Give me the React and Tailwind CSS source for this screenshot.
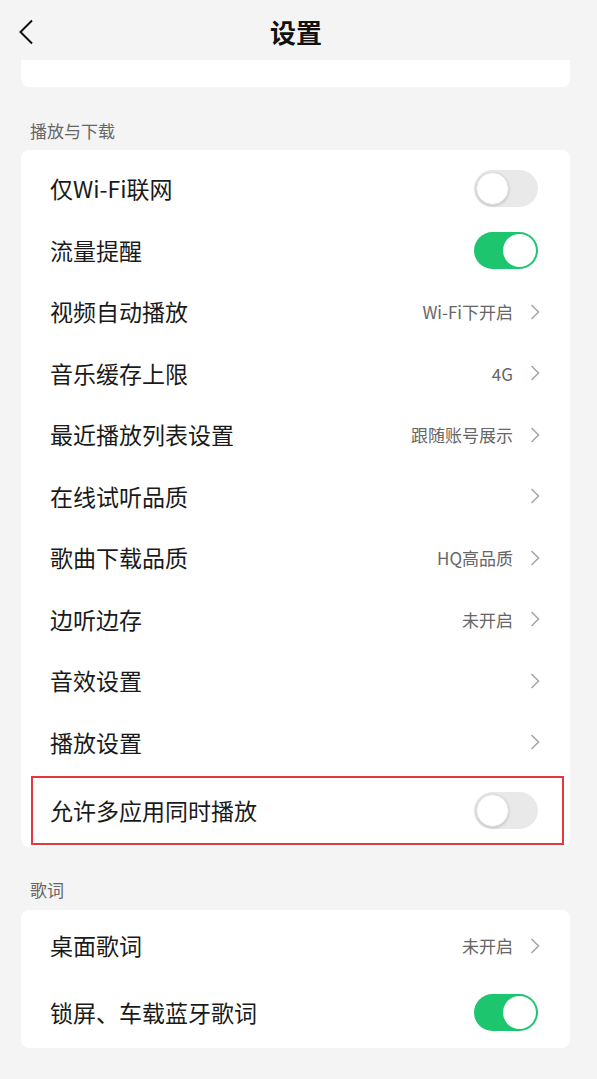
import React from "react";

const font = { fontFamily: '"Noto Sans CJK SC", "Noto Sans", sans-serif' };

function Toggle({ on }) {
  return (
    <div
      className={
        "relative h-[37px] w-[64px] rounded-full " +
        (on ? "bg-[#1dc56f]" : "bg-[#e9e9e9]")
      }
    >
      <div
        className={
          "absolute top-[2px] h-[33px] w-[33px] rounded-full bg-white " +
          (on
            ? "right-[2px]"
            : "left-[2px] shadow-[0_1px_3px_rgba(0,0,0,0.18)] border border-[#dcdcdc]")
        }
      />
    </div>
  );
}

function Chevron() {
  return (
    <svg width="12" height="18" viewBox="0 0 12 18" className="ml-[16px] -mr-[3px]">
      <path d="M2.5 2 L9.5 9 L2.5 16" fill="none" stroke="#a8a8a8" strokeWidth="1.6" />
    </svg>
  );
}

function Row({ label, value, toggle, h = "h-[61.5px]" }) {
  return (
    <div className={"flex items-center justify-between pl-[29px] pr-[32px] " + h}>
      <span className="text-[23px] text-[#1a1a1a] leading-none">{label}</span>
      <div className="flex items-center">
        {toggle !== undefined ? (
          <Toggle on={toggle} />
        ) : (
          <>
            {value && <span className="text-[17px] text-[#666] leading-none">{value}</span>}
            <Chevron />
          </>
        )}
      </div>
    </div>
  );
}

export default function App() {
  return (
    <div className="min-h-[1079px] w-[597px] bg-[#f4f4f4] overflow-hidden" style={font}>
      <div className="relative flex h-[62px] items-center justify-center pr-[5px]">
        <svg width="16" height="26" viewBox="0 0 16 26" className="absolute left-[18px] top-[19px]">
          <path d="M14 1.5 L2.5 13 L14 24.5" fill="none" stroke="#111" strokeWidth="2" />
        </svg>
        <span className="text-[26px] font-bold text-[#111]">设置</span>
      </div>
      <div className="ml-[21px] mr-[27px] -mt-[2px] h-[27px] rounded-b-[8px] bg-white" />
      <div className="px-[30px] pt-[35px] pb-[8px] text-[17px] text-[#666] leading-none">播放与下载</div>
      <div className="ml-[21px] mr-[27px] mt-[3px] rounded-[8px] bg-white pt-[8px] pb-[2px]">
        <Row label="仅Wi-Fi联网" toggle={false} />
        <Row label="流量提醒" toggle={true} />
        <Row label="视频自动播放" value="Wi-Fi下开启" />
        <Row label="音乐缓存上限" value="4G" />
        <Row label="最近播放列表设置" value="跟随账号展示" />
        <Row label="在线试听品质" />
        <Row label="歌曲下载品质" value="HQ高品质" />
        <Row label="边听边存" value="未开启" />
        <Row label="音效设置" />
        <Row label="播放设置" />
        <div className="ml-[10px] mr-[6px] mt-[3px] border-2 border-[#e5353f]">
          <div className="flex h-[65px] items-center justify-between pl-[17px] pr-[24px]">
            <span className="text-[23px] text-[#1a1a1a] leading-none">允许多应用同时播放</span>
            <Toggle on={false} />
          </div>
        </div>
      </div>
      <div className="px-[30px] pt-[34px] pb-[10px] text-[17px] text-[#666] leading-none">歌词</div>
      <div className="ml-[21px] mr-[27px] mt-[2px] rounded-[8px] bg-white pt-[2px] pb-[2px]">
        <Row label="桌面歌词" value="未开启" h="h-[67px]" />
        <Row label="锁屏、车载蓝牙歌词" toggle={true} h="h-[67px]" />
      </div>
    </div>
  );
}
